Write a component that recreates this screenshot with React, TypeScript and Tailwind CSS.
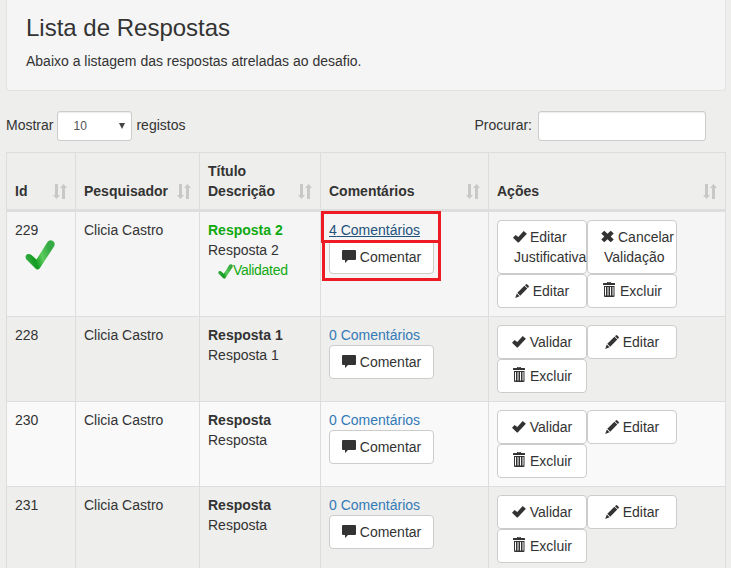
import React from "react";

function Ok() {
  return <svg className="h-[14px] w-[14px] shrink-0" viewBox="0 0 14 14" fill="currentColor"><path d="M10.700 1 13.900 3.800 5.700 12.400 4.900 12.400 0 7.800 2.600 5 5.300 6.900z" /></svg>;
}
function Remove() {
  return <svg className="h-[14px] w-[14px] shrink-0" viewBox="0 0 14 14" fill="currentColor"><path d="M3.300.8 6.500 3.700 9.700.8 12.700 3.600 9.700 6.500 12.700 9.400 9.700 12.200 6.500 9.300 3.300 12.200.3 9.400 3.300 6.500.3 3.600z" /></svg>;
}
function Pencil() {
  return <svg className="h-[14px] w-[14px] shrink-0" viewBox="0 0 14 14" fill="currentColor"><path d="M10.700.4Q11.600-.3 12.300.4L13.600 1.700Q14.200 2.400 13.600 3.200L12.800 4 10 1.200zM9.400 1.700 12.300 4.600 5.200 11.700 2.300 8.800zM1.800 9.400 4.600 12.200.2 13.900z" /></svg>;
}
function Trash() {
  return <svg className="-mt-[2px] h-[16px] w-[14px] shrink-0" viewBox="0 0 14 16" fill="currentColor"><path fillRule="evenodd" d="M5 1V.6Q5 0 5.600 0h2.800Q9 0 9 .6V1h3.500q.5 0 .5.500V3H1V1.500Q1 1 1.500 1zM6 .8V1h2V.8zM2 4h10.500v10q0 1-1 1H3q-1 0-1-1zM3 5v8.500h1V5zm2.500 0v8.500h1V5zM8 5v8.500h1V5zm2.500 0v8.500h1V5z" /></svg>;
}
function Comment() {
  return <svg className="h-[14px] w-[14px] shrink-0" viewBox="0 0 14 14" fill="currentColor"><path d="M1 0h12q1 0 1 1v8q0 1-1 1H6L3 13v-3H1q-1 0-1-1V1q0-1 1-1z" /></svg>;
}
function Sort() {
  return <svg className="mb-[2px] h-[15px] w-[14px] shrink-0" viewBox="0 0 14 15" fill="#c8c8c8"><path d="M2 0h3v11h2l-3.500 4L0 11h2zM9 15V4H7l3.500-4L14 4h-2v11z" /></svg>;
}
function GreenCheck({ className }: { className: string }) {
  return (
    <svg className={className} viewBox="0 0 30 30" fill="none">
      <defs>
        <linearGradient id="leaf" x1="2" y1="16" x2="24" y2="8" gradientUnits="userSpaceOnUse">
          <stop offset="0" stopColor="#2fa83c" /><stop offset=".25" stopColor="#129a20" /><stop offset=".6" stopColor="#5ccc5c" /><stop offset="1" stopColor="#35ab43" />
        </linearGradient>
      </defs>
      <path d="M1 19Q-.5 15 3 14Q5.500 13.500 7 15.500L11.500 19.500 22.500 2Q24.500-.8 28 .9Q30.800 3 29 6.500L15 28Q12.500 31 10 28z" fill="url(#leaf)" />
    </svg>
  );
}

function Button({ icon, children, className = "w-[90px]" }: { icon: React.ReactNode; children: React.ReactNode; className?: string }) {
  return (
    <button className={`flex justify-center rounded-[4px] border border-[#ccc] bg-white py-[6px] leading-[20px] whitespace-nowrap ${className}`}>
      <span className="flex gap-[4px]"><span className="flex h-[20px] items-center">{icon}</span>{children}</span>
    </button>
  );
}

function TallButton({ icon, first, second, firstClass, secondClass }: { icon: React.ReactNode; first: string; second: string; firstClass: string; secondClass: string }) {
  return (
    <button className="h-[54px] w-[90px] rounded-[4px] border border-[#ccc] bg-white pt-[6px] text-left align-top leading-[20px] whitespace-nowrap">
      <span className="flex h-full flex-col">
        <span className={`flex items-center gap-[3px] ${firstClass}`}>{icon}{first}</span>
        <span className={secondClass}>{second}</span>
      </span>
    </button>
  );
}

const columns = "grid grid-cols-[69px_124px_121px_168px_237px]";
const cell = "border-r border-[#ddd] p-2";
const headCell = "flex items-end justify-between border-r border-[#ddd] py-2 pr-2 pl-2 font-bold leading-[20px]";

function Row({ id, title, text, shade, validated = false }: { id: string; title: string; text: string; shade: string; validated?: boolean }) {
  return (
    <div className={`${columns} border-b border-b-[#ddd] leading-[20px] ${shade}`}>
      <div className={cell}>
        {id}
        {validated && <GreenCheck className="ml-[10px] h-[30px] w-[30px]" />}
      </div>
      <div className={cell}>Clicia Castro</div>
      <div className={cell}>
        <div className={validated ? "font-bold text-[#10a910]" : "font-bold"}>{title}</div>
        <div>{text}</div>
        {validated && <div className="ml-[10px] flex items-center tracking-[-0.3px] text-[#10a910]"><GreenCheck className="mt-[3px] h-[15px] w-[15px]" />Validated</div>}
      </div>
      <div className={`${cell} relative`}>
        <a className={validated ? "block text-[#23527c] underline" : "block text-[#337ab7]"}>{validated ? 4 : 0} Comentários</a>
        <Button icon={<Comment />} className="h-[34px] w-[105px]">Comentar</Button>
        {validated && (
          <>
            <div className="absolute top-[-1px] left-0 h-[32px] w-[120px] border-3 border-[#ed1c24]" />
            <div className="absolute top-[28px] left-[1px] h-[41px] w-[119px] border-3 border-[#ed1c24]" />
          </>
        )}
      </div>
      <div className={`${cell} flex flex-wrap content-start`}>
        {validated ? (
          <>
            <TallButton icon={<Ok />} first="Editar" second="Justificativa" firstClass="ml-[15px]" secondClass="ml-[16px]" />
            <TallButton icon={<Remove />} first="Cancelar" second="Validação" firstClass="ml-[13px]" secondClass="ml-[16px]" />
            <div className="h-0 w-[30px]" />
          </>
        ) : (
          <Button icon={<Ok />}>Validar</Button>
        )}
        <Button icon={<Pencil />}>Editar</Button>
        <Button icon={<Trash />}>Excluir</Button>
      </div>
    </div>
  );
}

export default function App() {
  return (
    <main className="h-[568px] w-[731px] overflow-hidden bg-[#eeeeec] pl-[6px] font-['Liberation_Sans',Arial,sans-serif] text-[14px] leading-[20px] text-[#333]">
      <section className="h-[91px] w-[720px] rounded-b-[4px] border border-t-0 border-[#e3e3e3] bg-[#f5f5f5] px-[19px] pt-[14px]">
        <h1 className="text-[24px] leading-[27px]">Lista de Respostas</h1>
        <p className="mt-[10px]">Abaixo a listagem das respostas atreladas ao desafio.</p>
      </section>
      <div className="mt-[20px] flex h-[30px] w-[700px] items-center">
        <span className="pb-[2px]">Mostrar</span>
        <div className="ml-[4px] flex h-[30px] w-[75px] items-center justify-between rounded-[3px] border border-[#ccc] bg-white pr-[6px] pl-[15px] text-[12px] text-[#555] shadow-[inset_0_1px_1px_rgba(0,0,0,0.075)]">
          10
          <svg className="h-[6px] w-[6px]" viewBox="0 0 6 6" fill="#444"><path d="M0 0h6L3 6z" /></svg>
        </div>
        <span className="ml-[4px] pb-[2px]">registos</span>
        <span className="ml-auto pb-[2px]">Procurar:</span>
        <input className="ml-[6px] h-[30px] w-[168px] rounded-[3px] border border-[#ccc] bg-white shadow-[inset_0_1px_1px_rgba(0,0,0,0.075)]" />
      </div>
      <div className="mt-[11px] w-[720px] border-t border-l border-[#ddd]">
        <div className={`${columns} h-[59px] border-b-3 border-b-[#ddd]`}>
          <div className={headCell}>Id<Sort /></div>
          <div className={headCell}>Pesquisador<Sort /></div>
          <div className={headCell}><span>Título<br />Descrição</span><Sort /></div>
          <div className={headCell}>Comentários<Sort /></div>
          <div className={headCell}>Ações<Sort /></div>
        </div>
        <Row id="229" title="Resposta 2" text="Resposta 2" shade="bg-[#f5f5f5]" validated />
        <Row id="228" title="Resposta 1" text="Resposta 1" shade="bg-[#eeeeec]" />
        <Row id="230" title="Resposta" text="Resposta" shade="bg-[#f9f9f9]" />
        <Row id="231" title="Resposta" text="Resposta" shade="bg-[#eeeeec]" />
      </div>
    </main>
  );
}
